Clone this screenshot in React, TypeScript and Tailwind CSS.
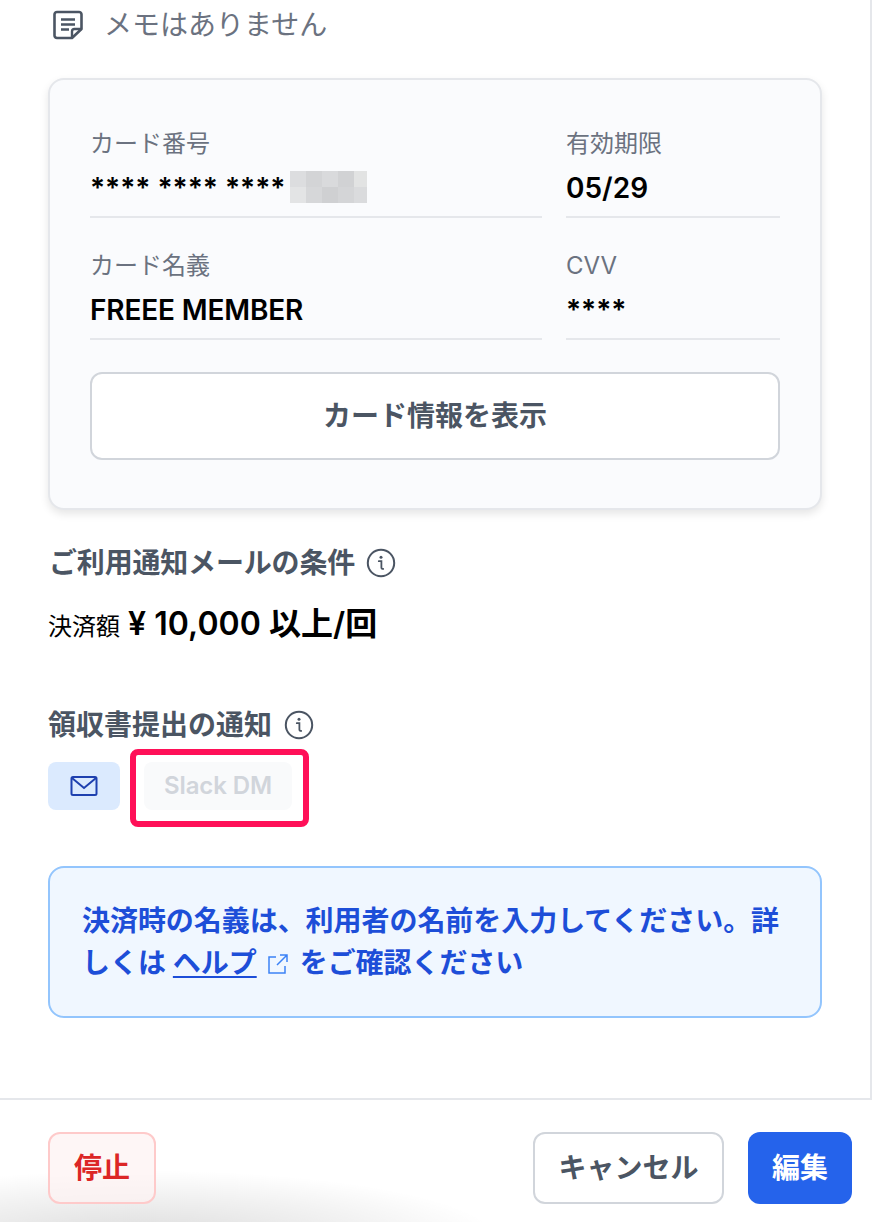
import React from "react";

const mosaic = [
  ["bg-[#dcdddf]", "bg-[#d3d4d6]", "bg-[#d9dadc]", "bg-[#d1d2d4]", "bg-[#e2e3e3]"],
  ["bg-[#e3e4e5]", "bg-[#d6d7d9]", "bg-[#cfd0d2]", "bg-[#d4d5d7]", "bg-[#dadbdd]"],
];

function InfoIcon() {
  return (
    <svg width="30" height="30" viewBox="0 0 30 30" fill="none" className="shrink-0">
      <circle cx="15" cy="15" r="13.2" stroke="#4b5563" strokeWidth="2" />
      <circle cx="15" cy="9.300" r="1.500" fill="#4b5563" />
      <path d="M12.800 13.200h2.600v6.200c0 1 .6 1.500 1.800 1.500" stroke="#4b5563" strokeWidth="1.800" strokeLinecap="round" />
    </svg>
  );
}

function Field({ label, children }: { label: string; children: React.ReactNode }) {
  return (
    <div className="h-[96px] border-b-2 border-[#e5e7eb]">
      <div className="text-[24px] leading-[36px] text-[#6b7280] h-[36px] mt-[4px] mb-[6px]">{label}</div>
      {children}
    </div>
  );
}

export default function App() {
  return (
    <div className="relative w-[872px] h-[1222px] overflow-hidden bg-white flex flex-col font-['Inter','Noto_Sans_CJK_JP',sans-serif]">
      <div className="flex-1 pl-[48px] pr-[48px] border-r-2 border-[#e5e7eb] min-h-0">
        <div className="flex items-center h-[50px] pl-[5px] gap-[21px]">
          <svg width="30" height="30" viewBox="0 0 30 30" fill="none" className="shrink-0">
            <path d="M19 28H4a2.500 2.500 0 0 1-2.500-2.500v-21A2.500 2.500 0 0 1 4 2h22a2.500 2.500 0 0 1 2.500 2.500V19L19 28Z" stroke="#4b5563" strokeWidth="2.600" strokeLinejoin="round" />
            <path d="M8 9.500h14M8 14.500h14M8 19.500h8" stroke="#4b5563" strokeWidth="2.400" />
            <path d="M19 28v-6.500a2.500 2.500 0 0 1 2.500-2.500h7" stroke="#4b5563" strokeWidth="2.400" />
          </svg>
          <span className="text-[28px] leading-[40px] text-[#6b7280]">メモはありません</span>
        </div>

        <div className="mt-[28px] h-[432px] rounded-[16px] border-2 border-[#e5e7eb] bg-[#fafbfd] pt-[42px] px-[40px] shadow-[0_4px_8px_rgba(0,0,0,0.1)]">
          <div className="grid grid-cols-[452px_214px] gap-x-[24px] gap-y-[26px]">
            <Field label="カード番号">
              <div className="flex items-center h-[40px]">
                <span className="text-[28px] font-semibold text-black whitespace-pre leading-[40px]">**** **** ****</span>
                <div className="ml-[5px] mt-[-2px] w-[77px] h-[32px] grid grid-cols-[16px_16px_16px_16px_13px] grid-rows-2">
                  {mosaic.flat().map((c, i) => (
                    <div key={i} className={c} />
                  ))}
                </div>
              </div>
            </Field>
            <Field label="有効期限">
              <div className="text-[28px] leading-[40px] font-semibold text-black">05/29</div>
            </Field>
            <Field label="カード名義">
              <div className="text-[28px] leading-[40px] font-semibold text-black tracking-[-0.150px]">FREEE MEMBER</div>
            </Field>
            <Field label="CVV">
              <div className="text-[28px] font-semibold text-black leading-[40px]">****</div>
            </Field>
          </div>
          <button className="mt-[32px] w-[690px] h-[88px] rounded-[12px] border-2 border-[#d1d5db] bg-white text-[28px] font-semibold text-[#4b5563]">
            カード情報を表示
          </button>
        </div>

        <div className="mt-[35px] flex items-center h-[36px] gap-[11px]">
          <span className="text-[28px] leading-[36px] font-semibold text-[#4b5563] ml-[1px] tracking-[-0.180px]">ご利用通知メールの条件</span>
          <InfoIcon />
        </div>
        <div className="mt-[19px] flex items-baseline h-[48px]">
          <span className="text-[24px] text-black">決済額</span>
          <span className="ml-[8px] text-[32px] leading-[48px] font-semibold text-black tracking-[0.050px]">¥ 10,000 以上/回</span>
        </div>

        <div className="mt-[59px] flex items-center h-[36px] gap-[12px]">
          <span className="text-[28px] leading-[36px] font-semibold text-[#4b5563]">領収書提出の通知</span>
          <InfoIcon />
        </div>
        <div className="mt-[19px] flex items-center h-[48px] gap-[24px]">
          <div className="w-[72px] h-[48px] rounded-[8px] bg-[#dbeafe] flex items-center justify-center">
            <svg width="28" height="22" viewBox="0 0 28 22" fill="none">
              <rect x="1.500" y="2" width="25" height="18" rx="1.500" stroke="#1e40af" strokeWidth="2" />
              <path d="M2 3l12 10L26 3" stroke="#1e40af" strokeWidth="2" />
            </svg>
          </div>
          <div className="relative w-[148px] h-[48px] rounded-[8px] bg-[#f9fafb] flex items-center justify-center text-[24px] font-semibold text-[#d1d5db]">
            <span className="tracking-[-0.100px]">Slack DM</span>
            <div className="absolute left-[-14px] top-[-13px] w-[179px] h-[78px] rounded-[8px] border-[6px] border-[#ff1058]" />
          </div>
        </div>

        <div className="mt-[56px] h-[152px] rounded-[16px] border-2 border-[#93c5fd] bg-[#f0f7ff] pl-[32px] pr-[30px] pt-[32px] text-[28px] leading-[42px] font-semibold text-[#1d4ed8] tracking-[-0.050px]">
          決済時の名義は、利用者の名前を入力してください。詳しくは <span className="underline underline-offset-[3px]">ヘルプ</span>
          <svg width="22" height="22" viewBox="0 0 22 22" fill="none" className="inline-block ml-[10px] mr-[11px] align-[-2px]">
            <path d="M9 4H2v16h16v-7" stroke="#3b82f6" strokeWidth="1.500" />
            <path d="M10 12 20 2M13 2h7v7" stroke="#3b82f6" strokeWidth="1.500" />
          </svg>
          をご確認ください
        </div>
      </div>

      <div className="relative h-[124px] shrink-0 border-t-2 border-[#e5e7eb] bg-white pr-[20px] pl-[48px] pt-[32px] flex justify-between">
        <div className="absolute left-[-220px] top-[70px] w-[720px] h-[140px] rounded-[50%] bg-[radial-gradient(closest-side,rgba(0,0,0,0.14),rgba(0,0,0,0.05)_65%,rgba(0,0,0,0))]" />
        <button className="relative w-[108px] h-[72px] rounded-[12px] border-2 border-[#fecaca] bg-[#fef2f2]/70 text-[28px] font-semibold text-[#dc2626]">停止</button>
        <div className="relative flex gap-[24px]">
          <button className="w-[191px] h-[72px] rounded-[12px] border-2 border-[#d1d5db] bg-white text-[28px] font-semibold text-[#4b5563]">キャンセル</button>
          <button className="w-[104px] h-[72px] rounded-[12px] bg-[#2563eb] text-[28px] font-semibold text-white">編集</button>
        </div>
      </div>
    </div>
  );
}
